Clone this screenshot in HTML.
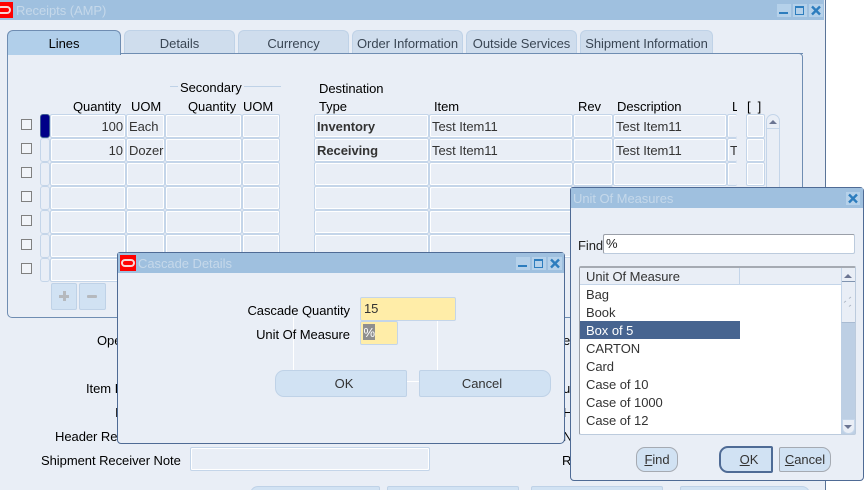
<!DOCTYPE html>
<html>
<head>
<meta charset="utf-8">
<style>
html,body{margin:0;padding:0;background:#fff}
#p{position:relative;width:868px;height:490px;overflow:hidden;background:#fff;font-family:"Liberation Sans",sans-serif;font-size:13px;letter-spacing:-.05px;color:#000}
#p div{position:absolute;box-sizing:border-box;white-space:nowrap}
.t{line-height:16px}
.r{text-align:right}
.tab{top:30px;height:23px;background:#CFDDED;border:1px solid #BFD2E7;border-bottom:0;border-radius:6px 6px 0 0;text-align:center;line-height:25px;color:#3a4654}
.f{height:24px;top:0;background:#E9EEF6;border:1px solid #C4D5E9;box-shadow:inset 1px 1px 0 #fff,inset -1px -1px 0 #fff;border-radius:2px;line-height:23px;padding:0 2px;color:#333}
.row{left:0;width:800px;height:24px}
.cb{left:21px;top:5px;width:11px;height:11px;border:1px solid #808080;background:#F1F4F9}
.ind{left:40px;top:0;width:10px;height:24px;border:1px solid #C4D5E9;border-radius:3px}
.a{left:50px;width:76px}.b{left:126px;width:39px}.c{left:165px;width:77px}.d{left:242px;width:38px}
.e{left:314px;width:115px;font-weight:bold}.g{left:429px;width:144px}.h{left:573px;width:40px}.i{left:613px;width:114px}
.j{left:727px;width:10px;border-right:0;padding:0 0 0 2px;overflow:hidden;box-shadow:inset 1px 1px 0 #fff}.k{left:746px;width:19px}
.tb{background:#9FC0DF}
.wb{width:14px;height:13px;background:#B5D1EA}
.btn{background:#D1E2F3;border:1px solid #BFD2E7;text-align:center;color:#333}
</style>
</head>
<body>
<div id="p">
<!-- main window -->
<div style="left:0;top:0;width:826px;height:490px;background:#E9EEF6;border-right:1px solid #5A7498"></div>
<div class="tb" style="left:0;top:0;width:824px;height:20px"></div>
<div style="left:0;top:2px;width:13px;height:16px;background:#F00"></div>
<div style="left:-3px;top:6px;width:14px;height:8px;border:2px solid #F6D6D6;border-radius:4px"></div>
<div class="t" style="left:16px;top:3px;color:#C5D8EA">Receipts (AMP)</div>
<div class="wb" style="left:777px;top:4px"></div><div style="left:779px;top:12px;width:9px;height:2px;background:#2D7DBE"></div>
<div class="wb" style="left:793px;top:4px"></div><div style="left:795px;top:6px;width:9px;height:9px;border:1px solid #2D7DBE;border-top-width:2px"></div>
<div class="wb" style="left:809px;top:4px"></div>
<svg style="position:absolute;left:810px;top:5px" width="12" height="11"><path d="M2 1.5L10 9.5M10 1.5L2 9.5" stroke="#2D7DBE" stroke-width="2.4" fill="none"/></svg>

<!-- panel -->
<div style="left:7px;top:53px;width:796px;height:265px;border:1px solid #6F8DB2;border-radius:0 4px 4px 5px"></div>
<div class="tab" style="left:7px;width:114px;background:#B1CFEA;border:1px solid #6F8DB2;border-bottom:0;color:#000;height:25px">Lines</div>
<div style="left:121px;top:53px;width:682px;height:1px;background:#6F8DB2"></div>
<div class="tab" style="left:124px;width:111px">Details</div>
<div class="tab" style="left:238px;width:111px">Currency</div>
<div class="tab" style="left:352px;width:111px">Order Information</div>
<div class="tab" style="left:466px;width:111px">Outside Services</div>
<div class="tab" style="left:580px;width:133px">Shipment Information</div>
<div style="left:124px;top:53px;width:589px;height:1px;background:#6F8DB2"></div>

<!-- headers -->
<div style="left:170px;top:86px;width:111px;height:1px;background:#BFD2E7"></div>
<div class="t" style="left:178px;top:80px;background:#E9EEF6;padding:0 2px">Secondary</div>
<div class="t" style="left:319px;top:81px">Destination</div>
<div class="t" style="left:73px;top:99px">Quantity</div>
<div class="t" style="left:131px;top:99px">UOM</div>
<div class="t" style="left:188px;top:99px">Quantity</div>
<div class="t" style="left:243px;top:99px">UOM</div>
<div class="t" style="left:319px;top:99px">Type</div>
<div class="t" style="left:434px;top:99px">Item</div>
<div class="t" style="left:578px;top:99px">Rev</div>
<div class="t" style="left:617px;top:99px">Description</div>
<div class="t" style="left:732px;top:99px;width:5px;overflow:hidden">L</div>
<div class="t" style="left:747px;top:99px">[&nbsp;&nbsp;]</div>

<!-- rows -->
<div class="row" style="top:114px"><div class="cb"></div><div class="ind" style="background:#000088;border-color:#3E5E92"></div><div class="f a r">100</div><div class="f b">Each</div><div class="f c"></div><div class="f d"></div><div class="f e">Inventory</div><div class="f g">Test Item11</div><div class="f h"></div><div class="f i">Test Item11</div><div class="f j"></div><div class="f k"></div></div>
<div class="row" style="top:138px"><div class="cb"></div><div class="ind"></div><div class="f a r">10</div><div class="f b" style="overflow:hidden">Dozer</div><div class="f c"></div><div class="f d"></div><div class="f e">Receiving</div><div class="f g">Test Item11</div><div class="f h"></div><div class="f i">Test Item11</div><div class="f j">T</div><div class="f k"></div></div>
<div class="row" style="top:162px"><div class="cb"></div><div class="ind"></div><div class="f a"></div><div class="f b"></div><div class="f c"></div><div class="f d"></div><div class="f e"></div><div class="f g"></div><div class="f h"></div><div class="f i"></div><div class="f j"></div><div class="f k"></div></div>
<div class="row" style="top:186px"><div class="cb"></div><div class="ind"></div><div class="f a"></div><div class="f b"></div><div class="f c"></div><div class="f d"></div><div class="f e"></div><div class="f g"></div><div class="f h"></div></div>
<div class="row" style="top:210px"><div class="cb"></div><div class="ind"></div><div class="f a"></div><div class="f b"></div><div class="f c"></div><div class="f d"></div><div class="f e"></div><div class="f g"></div><div class="f h"></div></div>
<div class="row" style="top:234px"><div class="cb"></div><div class="ind"></div><div class="f a"></div><div class="f b"></div><div class="f c"></div><div class="f d"></div><div class="f e"></div><div class="f g"></div><div class="f h"></div></div>
<div class="row" style="top:258px"><div class="cb"></div><div class="ind"></div><div class="f a"></div><div class="f b"></div><div class="f c"></div><div class="f d"></div></div>

<!-- table scrollbar -->
<div style="left:766px;top:114px;width:14px;height:90px;border:1px solid #C4D5E9;border-bottom:0;border-radius:7px 7px 0 0"></div>
<div style="left:766px;top:128px;width:14px;height:1px;background:#C4D5E9"></div>
<div style="left:769px;top:120px;width:0;height:0;border:4px solid transparent;border-top:0;border-bottom:4px solid #6B7592"></div>

<!-- add/remove -->
<div class="btn" style="left:51px;top:283px;width:26px;height:27px;border-radius:2px"></div>
<div class="btn" style="left:79px;top:283px;width:27px;height:27px;border-radius:2px"></div>
<div style="left:59px;top:295px;width:10px;height:3px;background:#B5B9BE"></div>
<div style="left:63px;top:291px;width:3px;height:10px;background:#B5B9BE"></div>
<div style="left:87px;top:295px;width:10px;height:3px;background:#B5B9BE;border-radius:1px"></div>

<!-- lower form labels -->
<div class="t" style="left:97px;top:333px">Ope</div>
<div class="t" style="left:86px;top:381px">Item I</div>
<div class="t" style="left:115px;top:405px">I</div>
<div class="t" style="left:55px;top:429px">Header Re</div>
<div class="t" style="left:41px;top:453px">Shipment Receiver Note</div>
<div class="f" style="left:190px;top:447px;width:240px"></div>
<div class="t" style="left:563px;top:333px">e</div>
<div class="t" style="left:563px;top:381px">u</div>
<div class="t" style="left:563px;top:405px">H</div>
<div class="t" style="left:563px;top:429px">N</div>
<div class="t" style="left:562px;top:453px">R</div>
<div class="btn" style="left:250px;top:486px;width:130px;height:20px;border-radius:8px 2px 0 0"></div>
<div class="btn" style="left:387px;top:486px;width:132px;height:20px;border-radius:2px"></div>
<div class="btn" style="left:531px;top:486px;width:132px;height:20px;border-radius:2px"></div>
<div class="btn" style="left:680px;top:486px;width:130px;height:20px;border-radius:2px 8px 0 0"></div>

<!-- cascade dialog -->
<div style="left:117px;top:252px;width:448px;height:192px;background:#E9EEF6;border:1px solid #4F6B95;border-radius:3px 4px 5px 4px"></div>
<div class="tb" style="left:118px;top:253px;width:446px;height:20px"></div>
<div style="left:120px;top:255px;width:16px;height:16px;background:#F00"></div>
<div style="left:121px;top:259px;width:14px;height:8px;border:2px solid #F6D6D6;border-radius:4px"></div>
<div class="t" style="left:138px;top:256px;color:#C5D8EA">Cascade Details</div>
<div class="wb" style="left:516px;top:257px"></div><div style="left:518px;top:265px;width:9px;height:2px;background:#2D7DBE"></div>
<div class="wb" style="left:532px;top:257px"></div><div style="left:534px;top:259px;width:9px;height:9px;border:1px solid #2D7DBE;border-top-width:2px"></div>
<div class="wb" style="left:548px;top:257px"></div>
<svg style="position:absolute;left:549px;top:258px" width="12" height="11"><path d="M2 1.5L10 9.5M10 1.5L2 9.5" stroke="#2D7DBE" stroke-width="2.4" fill="none"/></svg>
<div style="left:293px;top:317px;width:1px;height:53px;background:#fff"></div>
<div style="left:437px;top:321px;width:1px;height:49px;background:#fff"></div>
<div style="left:407px;top:381px;width:12px;height:1px;background:#fff"></div>
<div class="t r" style="left:200px;top:303px;width:150px">Cascade Quantity</div>
<div class="t r" style="left:200px;top:327px;width:150px">Unit Of Measure</div>
<div style="left:360px;top:297px;width:96px;height:24px;background:#FFEDA8;border:1px solid #C4D5E9;border-radius:2px;line-height:22px;padding-left:3px;color:#333">15</div>
<div style="left:360px;top:321px;width:38px;height:24px;background:#FFEDA8;border:1px solid #C4D5E9;border-radius:2px"></div>
<div style="left:363px;top:324px;width:12px;height:16px;background:#8F8F8F;color:#fff;line-height:17px;letter-spacing:-.5px;text-align:center">%</div>
<div class="btn" style="left:275px;top:370px;width:132px;height:27px;border-radius:9px 2px 2px 9px;line-height:26px;padding-left:6px">OK</div>
<div class="btn" style="left:419px;top:370px;width:132px;height:27px;border-radius:2px 9px 9px 2px;line-height:26px;padding-right:6px">Cancel</div>

<!-- UOM dialog -->
<div style="left:570px;top:187px;width:294px;height:294px;background:#E9EEF6;border:1px solid #4F6B95;border-radius:3px 4px 4px 4px"></div>
<div class="tb" style="left:571px;top:188px;width:292px;height:20px"></div>
<div class="t" style="left:573px;top:191px;color:#C5D8EA">Unit Of Measures</div>
<div class="wb" style="left:846px;top:192px"></div>
<svg style="position:absolute;left:847px;top:193px" width="12" height="11"><path d="M2 1.5L10 9.5M10 1.5L2 9.5" stroke="#2D7DBE" stroke-width="2.4" fill="none"/></svg>
<div class="t" style="left:578px;top:238px;color:#222">Find</div>
<div style="left:603px;top:234px;width:252px;height:20px;background:#fff;border:1px solid #BCCBDD;border-top-color:#9A9FA8;border-left-color:#9A9FA8;border-radius:2px;line-height:18px;padding-left:2px;color:#222">%</div>
<!-- list -->
<div style="left:579px;top:266px;width:277px;height:169px;background:#fff;border:1px solid #BCCBDD;border-top:2px solid #A5AAB2;border-left-color:#9A9FA8;border-radius:2px"></div>
<div style="left:580px;top:268px;width:262px;height:17px;background:#E9EEF6;border-bottom:1px solid #C4D5E9"></div>
<div style="left:739px;top:268px;width:1px;height:17px;background:#C4D5E9"></div>
<div class="t" style="left:586px;top:269px;color:#333">Unit Of Measure</div>
<div style="left:580px;top:321px;width:160px;height:18px;background:#476490"></div>
<div class="t" style="left:586px;top:287px;color:#333">Bag</div>
<div class="t" style="left:586px;top:305px;color:#333">Book</div>
<div class="t" style="left:586px;top:323px;color:#fff">Box of 5</div>
<div class="t" style="left:586px;top:341px;color:#333">CARTON</div>
<div class="t" style="left:586px;top:359px;color:#333">Card</div>
<div class="t" style="left:586px;top:377px;color:#333">Case of 10</div>
<div class="t" style="left:586px;top:395px;color:#333">Case of 1000</div>
<div class="t" style="left:586px;top:413px;color:#333">Case of 12</div>
<!-- list scrollbar -->
<div style="left:841px;top:268px;width:14px;height:166px;background:#BDCFE4"></div>
<div style="left:841px;top:268px;width:14px;height:55px;background:#E9EEF6;border-left:1px solid #C4D5E9;border-bottom:1px solid #A9BBD2"></div>
<div style="left:842px;top:281px;width:13px;height:1px;background:#8094B0"></div>
<div style="left:844px;top:274px;width:0;height:0;border:4px solid transparent;border-top:0;border-bottom:4px solid #6B7592"></div>
<svg style="position:absolute;left:843px;top:296px" width="10" height="12"><path d="M6 2.5L8 1M1 6.5L3 5M6 10.5L8 9" stroke="#AEB8C6" stroke-width="1" fill="none"/></svg>
<div style="left:842px;top:419px;width:13px;height:15px;background:#E9EEF6;border:1px solid #C4D5E9;border-radius:0 0 6px 6px"></div>
<div style="left:844px;top:425px;width:0;height:0;border:4px solid transparent;border-bottom:0;border-top:4px solid #6B7592"></div>
<!-- buttons -->
<div class="btn" style="left:636px;top:447px;width:42px;height:25px;border-radius:9px;border-color:#A5AAB2;line-height:24px"><u>F</u>ind</div>
<div class="btn" style="left:719px;top:446px;width:54px;height:27px;border:2px solid #4F6B95;border-radius:9px 2px 2px 9px;line-height:24px;padding-left:6px"><u>O</u>K</div>
<div class="btn" style="left:779px;top:447px;width:52px;height:25px;border-radius:2px 9px 9px 2px;border-color:#A5AAB2;line-height:24px"><u>C</u>ancel</div>
</div>
</body>
</html>
